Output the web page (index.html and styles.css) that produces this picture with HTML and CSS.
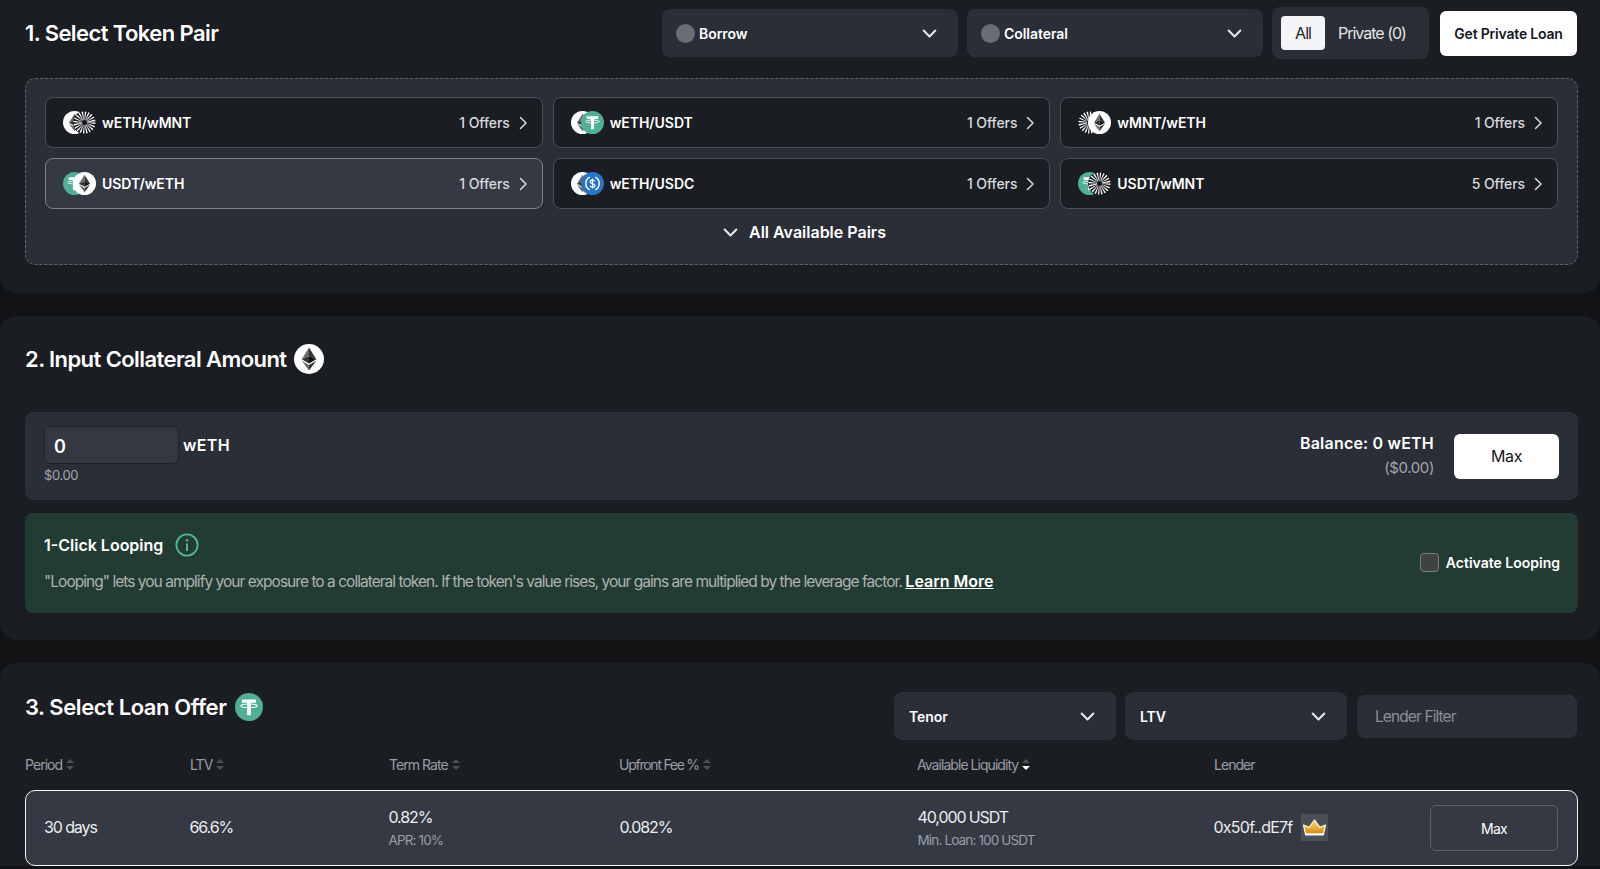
FILE: index.html
```html
<!DOCTYPE html>
<html lang="en">
<head>
<meta charset="utf-8">
<title>Select Token Pair</title>
<link rel="stylesheet" href="styles.css">
</head>
<body>
<svg class="sprite" aria-hidden="true">
  <symbol id="eth" viewBox="0 0 24 24">
    <circle cx="12" cy="12" r="12" fill="#fff"/>
    <path d="M12 2.8 6.2 12.2 12 9.6Z" fill="#6b6b6b"/>
    <path d="M12 2.8 17.8 12.2 12 9.6Z" fill="#333"/>
    <path d="M6.2 12.2 12 15.5V9.6Z" fill="#333"/>
    <path d="M17.8 12.2 12 15.5V9.6Z" fill="#111"/>
    <path d="M6.2 13.4 12 16.8V21.2Z" fill="#6b6b6b"/>
    <path d="M17.8 13.4 12 16.8V21.2Z" fill="#333"/>
  </symbol>
  <symbol id="usdt" viewBox="0 0 24 24">
    <circle cx="12" cy="12" r="12" fill="#50af95"/>
    <path d="M6 5.6H18V8.4H13.6V19H10.4V8.4H6Z" fill="#fff"/>
    <ellipse cx="12" cy="11" rx="7" ry="1.5" fill="none" stroke="#fff" stroke-width=".9"/>
  </symbol>
  <symbol id="usdc" viewBox="0 0 24 24">
    <circle cx="12" cy="12" r="12" fill="#2775ca"/>
    <path d="M9.2 5.4a7.3 7.3 0 0 0 0 13.2M14.8 5.4a7.3 7.3 0 0 1 0 13.2" fill="none" stroke="#fff" stroke-width="1.5"/>
    <path d="M14.4 9.8c-.4-1-1.3-1.4-2.4-1.4-1.4 0-2.4.7-2.4 1.8 0 2.6 4.9 1.2 4.9 3.8 0 1.1-1 1.8-2.5 1.8-1.2 0-2.2-.5-2.6-1.5M12 6.8v10.4" fill="none" stroke="#fff" stroke-width="1.2"/>
  </symbol>
  <symbol id="mnt" viewBox="0 0 24 24">
    <circle cx="12" cy="12" r="12" fill="#15171b"/>
    <circle cx="12" cy="12" r="7" fill="none" stroke="#fff" stroke-width="9" stroke-dasharray="1 1.2"/>
    <circle cx="12" cy="12" r="2.2" fill="#15171b"/>
  </symbol>
  <symbol id="chev-down" viewBox="0 0 16 16">
    <path d="M2.5 5.2 8 10.8l5.5-5.6" fill="none" stroke="currentColor" stroke-width="1.9" stroke-linecap="round" stroke-linejoin="round"/>
  </symbol>
  <symbol id="chev-right" viewBox="0 0 16 16">
    <path d="M5.5 2.5 11 8l-5.5 5.5" fill="none" stroke="currentColor" stroke-width="1.5" stroke-linecap="round" stroke-linejoin="round"/>
  </symbol>
</svg>

<main class="page">
  <section class="panel panel-pairs">
    <header class="pairs-head">
      <h2 class="title">1. Select Token Pair</h2>
      <div class="pairs-tools">
        <div class="select select-token"><span class="select-label"><i class="dot"></i>Borrow</span><svg class="chev"><use href="#chev-down"/></svg></div>
        <div class="select select-token"><span class="select-label"><i class="dot"></i>Collateral</span><svg class="chev"><use href="#chev-down"/></svg></div>
        <div class="tabs"><span class="tab tab-active">All</span><span class="tab">Private (0)</span></div>
        <button class="btn-loan">Get Private Loan</button>
      </div>
    </header>
    <div class="pair-box">
      <div class="pair-grid">
        <a class="pair"><span class="pair-icons"><svg><use href="#eth"/></svg><svg><use href="#mnt"/></svg></span><b class="pair-name">wETH/wMNT</b><span class="offers">1 Offers</span><svg class="chev-r"><use href="#chev-right"/></svg></a>
        <a class="pair"><span class="pair-icons"><svg><use href="#eth"/></svg><svg><use href="#usdt"/></svg></span><b class="pair-name">wETH/USDT</b><span class="offers">1 Offers</span><svg class="chev-r"><use href="#chev-right"/></svg></a>
        <a class="pair"><span class="pair-icons"><svg><use href="#mnt"/></svg><svg><use href="#eth"/></svg></span><b class="pair-name">wMNT/wETH</b><span class="offers">1 Offers</span><svg class="chev-r"><use href="#chev-right"/></svg></a>
        <a class="pair pair-active"><span class="pair-icons"><svg><use href="#usdt"/></svg><svg><use href="#eth"/></svg></span><b class="pair-name">USDT/wETH</b><span class="offers">1 Offers</span><svg class="chev-r"><use href="#chev-right"/></svg></a>
        <a class="pair"><span class="pair-icons"><svg><use href="#eth"/></svg><svg><use href="#usdc"/></svg></span><b class="pair-name">wETH/USDC</b><span class="offers">1 Offers</span><svg class="chev-r"><use href="#chev-right"/></svg></a>
        <a class="pair"><span class="pair-icons"><svg><use href="#usdt"/></svg><svg><use href="#mnt"/></svg></span><b class="pair-name">USDT/wMNT</b><span class="offers">5 Offers</span><svg class="chev-r"><use href="#chev-right"/></svg></a>
      </div>
      <div class="all-pairs"><svg class="chev"><use href="#chev-down"/></svg>All Available Pairs</div>
    </div>
  </section>

  <section class="panel panel-amount">
    <h2 class="title title-icon">2. Input Collateral Amount <svg class="title-token"><use href="#eth"/></svg></h2>
    <div class="amount-box">
      <div class="amount-left">
        <div class="amount-line"><div class="amount-input">0</div><span class="amount-token">wETH</span></div>
        <div class="amount-usd">$0.00</div>
      </div>
      <div class="amount-right">
        <div class="balance"><div class="balance-main">Balance: 0 wETH</div><div class="balance-usd">($0.00)</div></div>
        <button class="btn-max">Max</button>
      </div>
    </div>
    <div class="loop-box">
      <div class="loop-text">
        <div class="loop-title">1-Click Looping
          <svg class="info" viewBox="0 0 24 24"><circle cx="12" cy="12" r="10.6" fill="none" stroke="#4fb795" stroke-width="1.8"/><path d="M12 10.5V18" stroke="#4fb795" stroke-width="2"/><circle cx="12" cy="7.2" r="1.3" fill="#4fb795"/></svg>
        </div>
        <p class="loop-desc">"Looping" lets you amplify your exposure to a collateral token. If the token's value rises, your gains are multiplied by the leverage factor. <a class="learn">Learn More</a></p>
      </div>
      <label class="loop-check"><i class="checkbox"></i>Activate Looping</label>
    </div>
  </section>

  <section class="panel panel-offers">
    <header class="offers-head">
      <h2 class="title title-icon title-offers">3. Select Loan Offer <svg class="title-token title-usdt"><use href="#usdt"/></svg></h2>
      <div class="offers-tools">
        <div class="select select-filter"><span class="select-label">Tenor</span><svg class="chev"><use href="#chev-down"/></svg></div>
        <div class="select select-filter"><span class="select-label">LTV</span><svg class="chev"><use href="#chev-down"/></svg></div>
        <div class="lender-filter">Lender Filter</div>
      </div>
    </header>
    <div class="table-head cols">
      <span class="th">Period <i class="sort"></i></span>
      <span class="th">LTV <i class="sort"></i></span>
      <span class="th">Term Rate <i class="sort"></i></span>
      <span class="th th-tight">Upfront Fee % <i class="sort"></i></span>
      <span class="th">Available Liquidity <i class="sort sort-down"></i></span>
      <span class="th">Lender</span>
    </div>
    <div class="table-row cols">
      <div class="td td-first">30 days</div>
      <div class="td">66.6%</div>
      <div class="td">0.82%<small class="sub">APR: 10%</small></div>
      <div class="td">0.082%</div>
      <div class="td">40,000 USDT<small class="sub">Min. Loan: 100 USDT</small></div>
      <div class="td td-lender">
        <span class="lender">0x50f..dE7f
          <span class="crown-box"><svg class="crown" viewBox="0 0 24 20">
            <defs><linearGradient id="gold" x1="0" y1="0" x2="0" y2="1"><stop offset="0" stop-color="#ffe070"/><stop offset="1" stop-color="#d08a10"/></linearGradient></defs>
            <path d="M3 17 1 8l5.5 2.4L12 3l5.5 7.4L23 8l-2 9Z" fill="url(#gold)" stroke="#fff6dc" stroke-width="1.2" stroke-linejoin="round"/>
            <path d="M3.5 17.6h17" stroke="#fff" stroke-width="2" stroke-linecap="round"/>
          </svg></span>
        </span>
        <button class="btn-row">Max</button>
      </div>
    </div>
  </section>
</main>
</body>
</html>
```

FILE: styles.css
```css
* { box-sizing: border-box; }
html, body { margin: 0; height: 869px; overflow: hidden; }
body {
  background: #111315;
  color: #fff;
  font-family: Inter, "Liberation Sans", sans-serif;
  font-size: 14px;
  letter-spacing: -0.2px;
}
.sprite { display: none; }
.page { display: flex; flex-direction: column; gap: 23px; }
.panel { background: #1a1d22; border-radius: 16px; padding-left: 25px; padding-right: 22px; }
.panel-pairs { border-radius: 0 0 16px 16px; padding-top: 7px; padding-bottom: 28px; }
.panel-amount { padding-top: 28px; padding-bottom: 27px; }
.panel-offers { padding-top: 29px; border-radius: 16px 16px 0 0; }

.title { margin: 0; font-size: 22px; font-weight: 600; letter-spacing: -0.58px; line-height: 30px; }
.title-icon { display: flex; align-items: center; gap: 8px; }
.title-offers { letter-spacing: -0.42px; }
.title-token { width: 30px; height: 30px; }
.title-usdt { width: 28px; height: 28px; margin-left: 1px; }

.pairs-head { display: flex; justify-content: space-between; align-items: center; height: 52px; padding-right: 1px; }
.pairs-tools { display: flex; align-items: center; gap: 9px; }
.select { display: flex; align-items: center; justify-content: space-between; background: #2a2e36; border-radius: 8px; height: 48px; padding: 0 20px 0 14px; }
.select-token { width: 296px; }
.select-filter { width: 222px; padding-left: 15px; }
.select-label { display: flex; align-items: center; gap: 4px; font-weight: 600; font-size: 14px; letter-spacing: -0.05px; }
.dot { width: 19px; height: 19px; border-radius: 50%; background: #6a6d78; }
.chev { width: 17px; height: 17px; color: #e8e9eb; }
.tabs { display: flex; align-items: center; gap: 13px; height: 52px; width: 157px; background: #2a2e36; border-radius: 8px; padding: 0 9px; }
.tab { font-size: 16px; color: #e4e6e8; letter-spacing: -1px; }
.tab-active { display: flex; align-items: center; justify-content: center; width: 44px; height: 34px; background: #f4f5f6; color: #23262b; border-radius: 4px; }
.btn-loan { width: 137px; height: 45px; margin-left: 2px; background: #fff; color: #16181c; border: 0; border-radius: 6px; font: 600 14px Inter, "Liberation Sans", sans-serif; letter-spacing: -0.2px; }

.pair-box { margin-top: 19px; height: 187px; background: #2a2e36; border: 1px dashed #60646d; border-radius: 10px; padding: 18px 19px 0; }
.pair-grid { display: grid; grid-template-columns: repeat(3, 1fr); gap: 10px; }
.pair { display: flex; align-items: center; height: 51px; padding: 0 11px 0 17px; background: #1a1d22; border: 1.5px solid #4a4e57; border-radius: 8px; }
.pair-active { background: #343943; border-color: #7d818a; }
.pair-icons { display: flex; width: 39px; }
.pair-icons svg { width: 23px; height: 23px; }
.pair-icons svg + svg { margin-left: -13px; }
.pair-name { font-weight: 600; font-size: 14px; flex: 1; letter-spacing: -0.05px; }
.offers { font-weight: 500; font-size: 14px; color: #d8dadd; letter-spacing: -0.1px; }
.chev-r { width: 16px; height: 16px; margin-left: 5px; color: #d8dadd; }
.all-pairs { display: flex; align-items: center; justify-content: center; gap: 10px; height: 46px; padding-left: 5px; font-size: 16px; font-weight: 600; letter-spacing: 0; }

.amount-box { display: flex; justify-content: space-between; margin-top: 38px; height: 88px; background: #2a2e36; border-radius: 8px; padding: 14px 19px; }
.amount-line { display: flex; align-items: center; gap: 4px; }
.amount-input { width: 135px; height: 38px; display: flex; align-items: center; padding: 2px 0 0 9px; background: #333842; border: 1px solid #1f2228; border-radius: 6px; font-size: 18px; font-weight: 600; }
.amount-token { font-size: 16px; font-weight: 600; letter-spacing: 0.35px; }
.amount-usd { margin-top: 2px; font-size: 13px; line-height: 18px; color: #a3a7ae; letter-spacing: -0.4px; }
.amount-right { display: flex; align-items: center; gap: 20px; }
.balance { text-align: right; margin-bottom: 2px; }
.balance-main { font-size: 16px; font-weight: 600; line-height: 24px; letter-spacing: 0.2px; }
.balance-usd { margin-top: 2px; font-size: 15px; line-height: 22px; color: #a3a7ae; letter-spacing: -0.4px; }
.btn-max { width: 105px; height: 45px; background: #fff; color: #16181c; border: 0; border-radius: 6px; font: 400 16px Inter, "Liberation Sans", sans-serif; letter-spacing: -0.4px; }

.loop-box { display: flex; align-items: center; justify-content: space-between; margin-top: 13px; height: 100px; background: #223c33; border-radius: 8px; padding: 0 18px 0 19px; }
.loop-title { display: flex; align-items: center; gap: 12px; font-size: 16px; font-weight: 600; letter-spacing: 0; line-height: 24px; }
.info { width: 24px; height: 24px; }
.loop-desc { margin: 12px 0 0; font-size: 15.5px; line-height: 24px; color: #aeb3b2; letter-spacing: -0.965px; }
.learn { color: #fff; font-size: 16px; font-weight: 600; letter-spacing: 0; text-decoration: underline; }
.loop-check { display: flex; align-items: center; gap: 7px; padding-bottom: 2px; font-size: 14px; font-weight: 600; letter-spacing: 0; }
.checkbox { width: 19px; height: 19px; background: #3f4143; border: 1.5px solid #7a7d7f; border-radius: 4px; }

.offers-head { display: flex; justify-content: space-between; align-items: flex-start; height: 48px; padding-right: 1px; }
.offers-tools { display: flex; align-items: center; gap: 9px; }
.lender-filter { width: 220px; height: 43px; margin-left: 1px; display: flex; align-items: center; padding-left: 18px; background: #2a2e36; border-radius: 8px; color: #8b8f97; font-size: 15.5px; letter-spacing: -0.9px; }

.cols { display: grid; grid-template-columns: 165px 199px 230px 298px 297px 1fr; }
.table-head { height: 50px; align-items: center; padding-bottom: 1px; }
.th { display: flex; align-items: center; gap: 4px; font-size: 14px; color: #9a9ea6; letter-spacing: -0.95px; }
.th-tight { letter-spacing: -1.25px; }
.sort { display: inline-block; position: relative; width: 8px; height: 11px; }
.sort::before, .sort::after { content: ""; position: absolute; left: 0; border-left: 4px solid transparent; border-right: 4px solid transparent; }
.sort::before { top: 0; border-bottom: 4.5px solid #4c505a; }
.sort::after { bottom: 0; border-top: 4.5px solid #4c505a; }
.sort-down::after { border-top-color: #fff; }

.table-row { height: 76px; align-items: center; padding-bottom: 2px; background: #343943; border: 1.5px solid #f2f3f4; border-radius: 10px; grid-template-columns: 163.5px 199px 231px 298px 296px 1fr; }
.td { font-size: 16px; letter-spacing: -1.1px; color: #eceef0; }
.td-first { padding-left: 18px; }
.sub { display: block; margin-top: 5px; font-size: 13.5px; color: #9a9ea6; letter-spacing: -0.85px; }
.td-lender { display: flex; align-items: center; justify-content: space-between; padding-right: 19px; }
.lender { display: flex; align-items: center; gap: 8px; letter-spacing: -0.75px; }
.crown-box { display: flex; align-items: center; justify-content: center; width: 27px; height: 27px; background: #4b4f57; }
.crown { width: 25px; height: 20px; }
.btn-row { width: 128px; height: 46px; margin-top: 2px; background: transparent; color: #fff; border: 1.5px solid #5c6068; border-radius: 6px; font: 400 14px Inter, "Liberation Sans", sans-serif; letter-spacing: -0.7px; }
```
